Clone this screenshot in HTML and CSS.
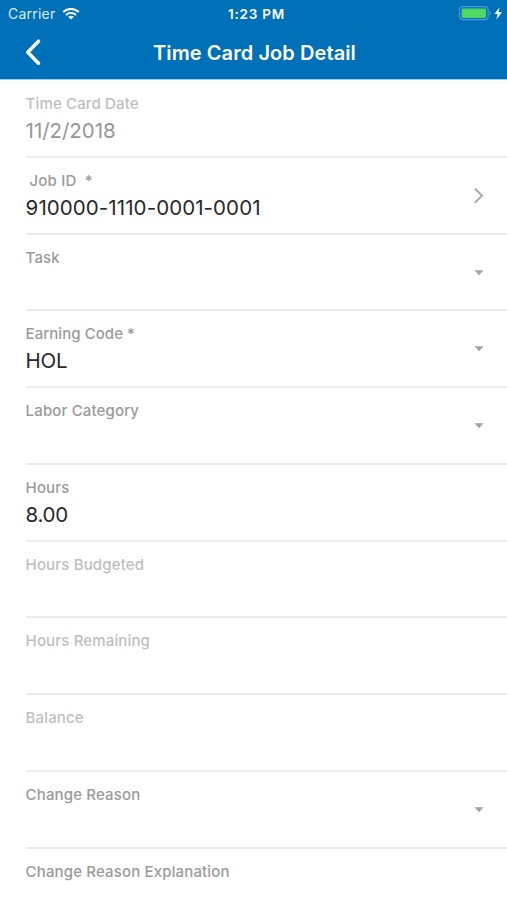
FILE: index.html
```
<!DOCTYPE html>
<html lang="en">
<head>
<meta charset="utf-8">
<title>Time Card Job Detail</title>
<link rel="stylesheet" href="styles.css">
</head>
<body>
<header class="header">
  <div class="status">
    <div class="carrier"><span>Carrier</span>
      <svg class="wifi" width="18" height="13" viewBox="0 0 18 13" fill="none" stroke="#fff" stroke-width="2.1"><path d="M1.2 5.1C5.7.9 12.3.9 16.8 5.1M4 8C7 5.3 11 5.3 14 8"/><path d="M9 12.5 6.2 9.7Q9 7.6 11.8 9.7Z" fill="#fff" stroke="none"/></svg>
    </div>
    <span class="time">1:23 PM</span>
    <svg class="battery" width="46" height="16" viewBox="0 0 46 16"><rect x="1.5" y=".7" width="28.6" height="13" rx="3" fill="none" stroke="#4b9ad8" stroke-width="1.2"/><rect x="3.6" y="2.6" width="24.4" height="9.4" rx="1.2" fill="#4cd964"/><path d="M31.6 5q2.4 2.2 0 4.4z" fill="#5ba3dc"/><path d="M41.7 1.3 36.4 8.1h3.3L38.3 13.5 44 6.2h-3.5z" fill="#fff"/></svg>
  </div>
  <div class="nav">
    <svg class="back" width="20" height="30" viewBox="0 0 20 30" fill="none" stroke="#fff" stroke-width="3.5" stroke-linecap="round" stroke-linejoin="round"><path d="M16.5 3.2 5.8 14.2 16.5 25.2"/></svg>
    <h1>Time Card Job Detail</h1>
  </div>
</header>
<main class="form">
  <div class="row disabled first"><div class="label">Time Card Date</div><div class="value date">11/2/2018</div></div>
  <div class="row"><div class="label job">Job ID&nbsp; *</div><div class="value jobid">910000-1110-0001-0001</div><svg class="chevron" width="12" height="18" viewBox="0 0 12 18" fill="none" stroke="#a9a9a9" stroke-width="2"><path d="M1.8 1.5 9 8.6 1.8 15.7"/></svg></div>
  <div class="row"><div class="label">Task</div><svg class="caret" width="10" height="6" viewBox="0 0 10 6"><path d="M.5.3h9L5 5.2z"/></svg></div>
  <div class="row"><div class="label code">Earning Code *</div><div class="value">HOL</div><svg class="caret" width="10" height="6" viewBox="0 0 10 6"><path d="M.5.3h9L5 5.2z"/></svg></div>
  <div class="row"><div class="label">Labor Category</div><svg class="caret" width="10" height="6" viewBox="0 0 10 6"><path d="M.5.3h9L5 5.2z"/></svg></div>
  <div class="row"><div class="label">Hours</div><div class="value">8.00</div></div>
  <div class="row disabled"><div class="label">Hours Budgeted</div></div>
  <div class="row disabled"><div class="label">Hours Remaining</div></div>
  <div class="row disabled"><div class="label">Balance</div></div>
  <div class="row"><div class="label">Change Reason</div><svg class="caret" width="10" height="6" viewBox="0 0 10 6"><path d="M.5.3h9L5 5.2z"/></svg></div>
  <div class="row"><div class="label">Change Reason Explanation</div></div>
</main>
</body>
</html>
```
FILE: styles.css
```
* { box-sizing: border-box; }
body { margin: 0; height: 900px; overflow: hidden; background: #fff; font-family: Inter, "Liberation Sans", sans-serif; }
.header { height: 79px; background: #0070b9; color: #fff; box-shadow: 0 1px 0 #9acbe8; position: relative; }
.status { height: 27px; display: grid; grid-template-columns: 1fr auto 1fr; align-items: center; padding: 0 3px 0 8px; font-size: 14px; }
.carrier { display: flex; align-items: center; gap: 6.8px; letter-spacing: .22px; color: #d9edfa; }
.time { font-weight: 600; font-size: 13.5px; letter-spacing: .8px; margin-right: 1px; transform: translateX(1px); }
.battery { justify-self: end; }
.nav { height: 52px; display: grid; grid-template-columns: 60px 1fr 60px; align-items: center; }
.back { margin-left: 22px; }
h1 { margin: 0; text-align: center; font-size: 20px; line-height: 24px; font-weight: 600; letter-spacing: .08px; white-space: nowrap; padding-left: 2px; }
.form { padding-left: 25.6px; }
.row { position: relative; height: 76.75px; padding-top: 13px; border-bottom: 2px solid #ebebeb; }
.first { height: 78.9px; padding-top: 14.5px; }
.label { height: 20px; line-height: 20px; font-size: 15px; font-weight: 500; letter-spacing: .15px; color: #9a9a9a; white-space: nowrap; }
.job { padding-left: 4px; }
.code { letter-spacing: .05px; }
.value { margin-top: 4px; height: 26px; line-height: 26px; font-size: 20.5px; letter-spacing: -.3px; color: #282828; white-space: nowrap; }
.date { letter-spacing: -.05px; }
.jobid { letter-spacing: .08px; }
.disabled .label { color: #bebebe; }
.disabled .value { color: #969696; }
.chevron { position: absolute; right: 22px; top: 29px; }
.caret { position: absolute; right: 23px; top: 35px; fill: #a2a2a2; }
```
